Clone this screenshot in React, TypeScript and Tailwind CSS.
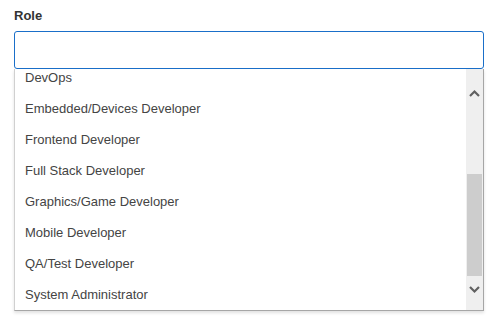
import React from "react";

const roles = [
  "DevOps",
  "Embedded/Devices Developer",
  "Frontend Developer",
  "Full Stack Developer",
  "Graphics/Game Developer",
  "Mobile Developer",
  "QA/Test Developer",
  "System Administrator",
];

function Chevron({ up }: { up?: boolean }) {
  return (
    <svg width="11" height="8" viewBox="0 0 11 8" className="block">
      <path
        d={up ? "M1 7 L5.5 2.5 L10 7" : "M1 1 L5.5 5.5 L10 1"}
        fill="none"
        stroke="#606060"
        strokeWidth="2.2"
      />
    </svg>
  );
}

export default function App() {
  return (
    <div className="w-[490px] h-[319px] bg-white pl-[14px] pt-[8px] font-['Liberation_Sans',Arial,sans-serif]">
      <label className="block text-[13px] leading-[15px] font-bold text-[#333] mb-[8px]">Role</label>
      <div className="w-[470px] h-[38px] border border-[#1a6fc9] rounded-[3px] bg-white" />
      <div className="w-[470px] h-[242px] flex border-l border-l-[#d0d0d0] border-r border-b border-[#a6a6a6] bg-white shadow-[0_2px_3px_rgba(0,0,0,0.12)]">
        <div className="flex-1 overflow-hidden">
          <ul className="-mt-[7px]">
            {roles.map((r) => (
              <li key={r} className="h-[31px] flex items-center pl-[10px] text-[13px] text-[#444]">
                {r}
              </li>
            ))}
          </ul>
        </div>
        <div className="w-[17px] bg-[#efefef] flex flex-col items-center">
          <div className="pt-[20px]">
            <Chevron up />
          </div>
          <div className="mt-[77px] w-[15px] h-[102px] bg-[#cdcdcd]" />
          <div className="mt-[10px]">
            <Chevron />
          </div>
        </div>
      </div>
    </div>
  );
}
